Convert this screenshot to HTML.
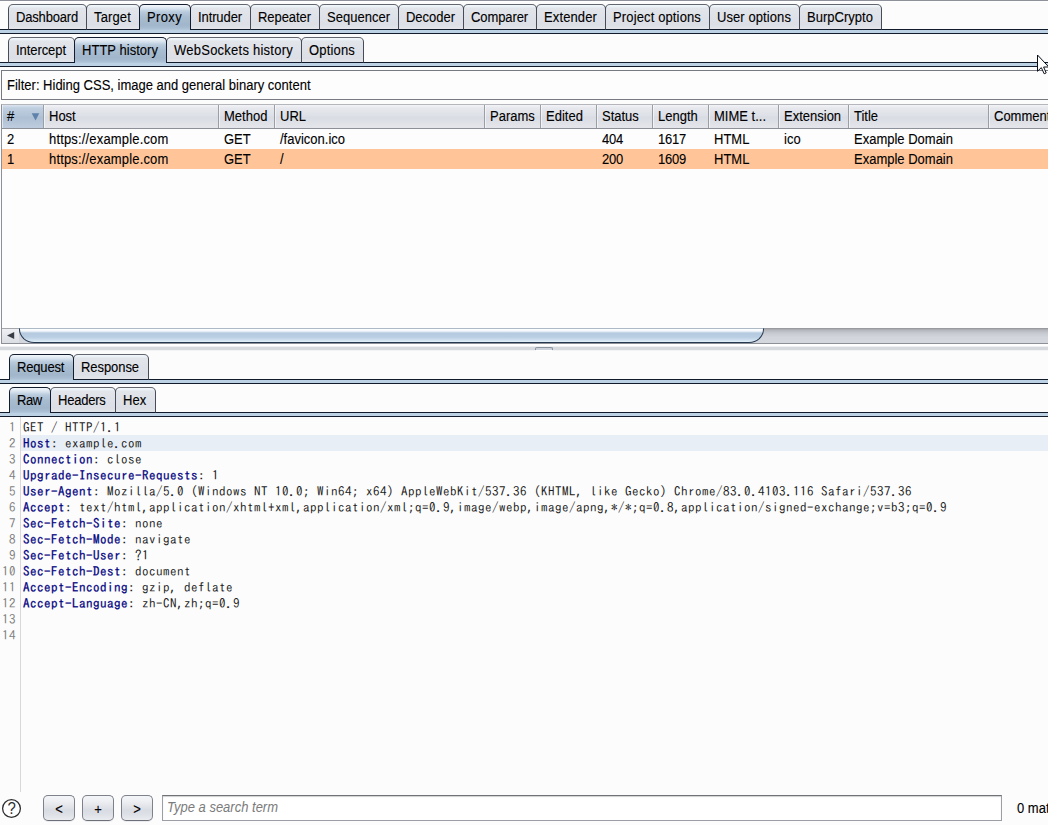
<!DOCTYPE html>
<html><head><meta charset="utf-8"><title>Burp Suite</title>
<style>
html,body{margin:0;padding:0;}
body{width:1048px;height:825px;overflow:hidden;background:#fcfcfc;position:relative;font-family:"Liberation Sans",sans-serif;font-size:13px;color:#000;}
.abs{position:absolute;}
.t{-webkit-text-stroke:0.1px #000;display:inline-block;line-height:16px;white-space:nowrap;transform:scaleY(1.075);transform-origin:0 12.5px;}
.hl{position:absolute;left:0;width:1048px;height:1px;}
.bar{position:absolute;left:0;width:1048px;height:5px;background:#bdd1e5;border-top:1px solid #121b2c;border-bottom:1px solid #121b2c;box-sizing:border-box;}
.tab{position:absolute;box-sizing:border-box;height:26px;border:1px solid #474c58;border-top-color:#62666e;border-bottom:1px solid #121b2c;border-radius:5px 5px 0 0;
 background:linear-gradient(#f4f8fb 0px,#e9f0f6 2px,#e2e5ea 3px,#dee1e7 13px,#dcdfe5 20px,#e5e7ec 25px);
 line-height:25px;padding-left:7px;white-space:nowrap;}
.tab.sel{border-color:#141d2f;border-bottom:none;
 background:linear-gradient(#f4f8fc 0px,#dde7f1 3px,#b8cadc 7px,#a9bdd1 12px,#a2b6cb 20px,#a9bdd2 23px,#b5c9dd 25px);}
.th{position:absolute;top:105px;height:23px;box-sizing:border-box;line-height:23px;padding-left:5px;border-right:1px solid #9b9ea5;white-space:nowrap;overflow:hidden;
 background:linear-gradient(#f3f4f7 0px,#e6e8ed 3px,#dde0e6 11px,#d9dce3 12px,#e3e5ea 22px);box-shadow:inset 1px 0 0 rgba(255,255,255,.55);}
.th.sorted{background:linear-gradient(#dbe5f0 0px,#c0cfe0 3px,#b3c4d8 11px,#adbfd4 12px,#bccbdd 22px);}
.td{position:absolute;height:20px;line-height:20px;white-space:nowrap;}
.ed{position:absolute;left:0;top:417px;width:1048px;height:376px;font-family:"IPAGothic","Liberation Mono",monospace;font-size:13px;letter-spacing:0.5px;}
.ln{position:absolute;left:0;width:16px;text-align:right;color:#7f7f7f;height:16px;line-height:16px;}
.tx{position:absolute;left:23px;height:16px;line-height:16px;white-space:pre;color:#1c1c1c;}
.tx b{font-weight:normal;color:#000080;-webkit-text-stroke:0.25px #000080;}
.btn{position:absolute;top:795px;height:26px;width:32px;box-sizing:border-box;border:1px solid #7d818a;border-bottom-color:#6c7079;border-radius:5px;text-align:center;line-height:28px;
 background:linear-gradient(#f4f5f8 0px,#eef0f3 5px,#e3e5ea 10px,#d9dce2 14px,#dcdfe5 18px,#eaecf0 24px);box-shadow:0 1px 0 #ececef;}
.btn .t{transform-origin:0 12.5px;}
</style></head><body>
<div class="hl" style="top:0;background:#8e9199"></div><div class="hl" style="top:1px;background:#fff"></div>

<div class="bar" style="top:29px"></div>
<div class="tab" style="left:8px;top:4px;width:79px"><span class="t" style="letter-spacing:-0.179px;">Dashboard</span></div>
<div class="tab" style="left:86px;top:4px;width:54px"><span class="t" style="letter-spacing:0.143px;">Target</span></div>
<div class="tab" style="left:190px;top:4px;width:61px"><span class="t" style="letter-spacing:-0.102px;">Intruder</span></div>
<div class="tab" style="left:250px;top:4px;width:70px"><span class="t" style="letter-spacing:-0.061px;">Repeater</span></div>
<div class="tab" style="left:319px;top:4px;width:80px"><span class="t" style="letter-spacing:0.012px;">Sequencer</span></div>
<div class="tab" style="left:398px;top:4px;width:66px"><span class="t" style="letter-spacing:-0.020px;">Decoder</span></div>
<div class="tab" style="left:463px;top:4px;width:74px"><span class="t" style="letter-spacing:-0.100px;">Comparer</span></div>
<div class="tab" style="left:536px;top:4px;width:70px"><span class="t" style="letter-spacing:0.119px;">Extender</span></div>
<div class="tab" style="left:605px;top:4px;width:105px"><span class="t" style="letter-spacing:0.133px;">Project options</span></div>
<div class="tab" style="left:709px;top:4px;width:91px"><span class="t" style="letter-spacing:0.085px;">User options</span></div>
<div class="tab" style="left:799px;top:4px;width:83px"><span class="t" style="letter-spacing:0.025px;">BurpCrypto</span></div>
<div class="tab sel" style="left:139px;top:4px;width:52px"><span class="t" style="letter-spacing:0.353px;">Proxy</span></div>
<div class="bar" style="top:62px"></div>
<div class="tab" style="left:8px;top:37px;width:67px"><span class="t" style="letter-spacing:-0.066px;">Intercept</span></div>
<div class="tab" style="left:166px;top:37px;width:136px"><span class="t" style="letter-spacing:0.242px;">WebSockets history</span></div>
<div class="tab" style="left:301px;top:37px;width:63px"><span class="t" style="letter-spacing:0.170px;">Options</span></div>
<div class="tab sel" style="left:74px;top:37px;width:93px"><span class="t" style="letter-spacing:0.033px;">HTTP history</span></div>
<div class="abs" style="left:1px;top:70px;width:1060px;height:30px;box-sizing:border-box;border:1px solid #777a80;background:#fdfdfd;line-height:29px;padding-left:5px"><span class="t" style="">Filter: Hiding CSS, image and general binary content</span></div>
<div class="abs" style="left:1px;top:104px;width:1060px;height:240px;box-sizing:border-box;border:1px solid #8d9097;border-top-color:#b4b6bb;background:#fdfdfd"></div>
<div class="hl" style="top:128px;left:2px;background:#8d9097"></div>

<div class="th sorted" style="left:2px;width:42px"><span class="t" style="">#</span></div>
<div class="th " style="left:44px;width:175px"><span class="t" style="">Host</span></div>
<div class="th " style="left:219px;width:56px"><span class="t" style="">Method</span></div>
<div class="th " style="left:275px;width:210px"><span class="t" style="">URL</span></div>
<div class="th " style="left:485px;width:56px"><span class="t" style="">Params</span></div>
<div class="th " style="left:541px;width:56px"><span class="t" style="">Edited</span></div>
<div class="th " style="left:597px;width:56px"><span class="t" style="">Status</span></div>
<div class="th " style="left:653px;width:56px"><span class="t" style="">Length</span></div>
<div class="th " style="left:709px;width:70px"><span class="t" style="">MIME t...</span></div>
<div class="th " style="left:779px;width:70px"><span class="t" style="">Extension</span></div>
<div class="th " style="left:849px;width:140px"><span class="t" style="">Title</span></div>
<div class="th " style="left:989px;width:80px"><span class="t" style="">Comment</span></div>
<svg class="abs" style="left:31px;top:113px" width="9" height="8"><path d="M0.7 0.3 L8.3 0.3 L4.5 7.5 Z" fill="#5f82aa"/></svg>
<div class="abs" style="left:2px;top:149px;width:1046px;height:20px;background:#ffc599"></div>
<div class="td" style="left:7px;top:130px"><span class="t" style="">2</span></div>
<div class="td" style="left:49px;top:130px"><span class="t" style="letter-spacing:0.167px;">https://example.com</span></div>
<div class="td" style="left:224px;top:130px"><span class="t" style="">GET</span></div>
<div class="td" style="left:280px;top:130px"><span class="t" style="">/favicon.ico</span></div>
<div class="td" style="left:602px;top:130px"><span class="t" style="letter-spacing:-0.250px;">404</span></div>
<div class="td" style="left:658px;top:130px"><span class="t" style="letter-spacing:-0.250px;">1617</span></div>
<div class="td" style="left:714px;top:130px"><span class="t" style="">HTML</span></div>
<div class="td" style="left:784px;top:130px"><span class="t" style="">ico</span></div>
<div class="td" style="left:854px;top:130px"><span class="t" style="">Example Domain</span></div>
<div class="td" style="left:7px;top:150px"><span class="t" style="">1</span></div>
<div class="td" style="left:49px;top:150px"><span class="t" style="letter-spacing:0.167px;">https://example.com</span></div>
<div class="td" style="left:224px;top:150px"><span class="t" style="">GET</span></div>
<div class="td" style="left:280px;top:150px"><span class="t" style="">/</span></div>
<div class="td" style="left:602px;top:150px"><span class="t" style="letter-spacing:-0.250px;">200</span></div>
<div class="td" style="left:658px;top:150px"><span class="t" style="letter-spacing:-0.250px;">1609</span></div>
<div class="td" style="left:714px;top:150px"><span class="t" style="">HTML</span></div>
<div class="td" style="left:854px;top:150px"><span class="t" style="">Example Domain</span></div>

<div class="abs" style="left:2px;top:328px;width:1046px;height:15px;background:linear-gradient(#909196 0px,#b4b6bc 2px,#c6c9d0 5px,#d2d5dc 9px,#d4d7de 14px)"></div>
<div class="abs" style="left:2px;top:328px;width:17px;height:15px;background:linear-gradient(#a4a6ab 0px,#a4a6ab 1px,#eff0f3 1px,#e6e8ec 7px,#dcdfe4 14px)"></div>
<svg class="abs" style="left:6px;top:331px" width="9" height="9"><path d="M8.2 0.9 L8.2 7.9 L1 4.4 Z" fill="#373c45"/></svg>
<div class="abs" style="left:19px;top:328px;width:745px;height:15px;box-sizing:border-box;border:1px solid #24384f;border-top:1px solid #aeb9c6;border-radius:0 0 15px 15px / 0 0 14px 14px;
 background:linear-gradient(#ffffff 0px,#f2f7fb 2px,#b6cadf 4px,#b9cee3 8px,#cfe0ef 11px,#e2f0fa 13px)"></div>
<div class="abs" style="left:0;top:344px;width:1048px;height:7px;background:linear-gradient(#fff 0,#fff 2px,#eeeff2 2px,#eeeff2 3px,#d6d9de 3px,#d6d9de 6px,#f3f4f6 6px,#f3f4f6 7px)"></div>
<div class="abs" style="left:535px;top:347px;width:18px;height:3px;box-sizing:border-box;border:1px solid #8793a0;border-bottom:none;border-radius:2px 2px 0 0;background:#cdd1d9"></div>
<div class="abs" style="left:536px;top:350px;width:16px;height:1px;background:#ffffff"></div>

<div class="bar" style="top:379px"></div>
<div class="tab" style="left:73px;top:354px;width:76px"><span class="t" style="letter-spacing:-0.068px;">Response</span></div>
<div class="tab sel" style="left:9px;top:354px;width:65px"><span class="t" style="letter-spacing:-0.160px;">Request</span></div>
<div class="bar" style="top:412px"></div>
<div class="tab" style="left:50px;top:387px;width:66px"><span class="t" style="letter-spacing:-0.220px;">Headers</span></div>
<div class="tab" style="left:115px;top:387px;width:41px"><span class="t" style="letter-spacing:0.025px;">Hex</span></div>
<div class="tab sel" style="left:9px;top:387px;width:42px"><span class="t" style="letter-spacing:-0.439px;">Raw</span></div>
<div class="ed">
<div class="abs" style="left:20px;top:0;width:1px;height:375px;background:#d9d9d9"></div>
<div class="abs" style="left:21px;top:18px;width:1027px;height:16px;background:#e8eef5"></div>
<div class="ln" style="top:3px">1</div><div class="tx" style="top:3px">GET / HTTP/1.1</div>
<div class="ln" style="top:19px">2</div><div class="tx" style="top:19px"><b>Host</b>: example.com</div>
<div class="ln" style="top:35px">3</div><div class="tx" style="top:35px"><b>Connection</b>: close</div>
<div class="ln" style="top:51px">4</div><div class="tx" style="top:51px"><b>Upgrade-Insecure-Requests</b>: 1</div>
<div class="ln" style="top:67px">5</div><div class="tx" style="top:67px"><b>User-Agent</b>: Mozilla/5.0 (Windows NT 10.0; Win64; x64) AppleWebKit/537.36 (KHTML, like Gecko) Chrome/83.0.4103.116 Safari/537.36</div>
<div class="ln" style="top:83px">6</div><div class="tx" style="top:83px"><b>Accept</b>: text/html,application/xhtml+xml,application/xml;q=0.9,image/webp,image/apng,*/*;q=0.8,application/signed-exchange;v=b3;q=0.9</div>
<div class="ln" style="top:99px">7</div><div class="tx" style="top:99px"><b>Sec-Fetch-Site</b>: none</div>
<div class="ln" style="top:115px">8</div><div class="tx" style="top:115px"><b>Sec-Fetch-Mode</b>: navigate</div>
<div class="ln" style="top:131px">9</div><div class="tx" style="top:131px"><b>Sec-Fetch-User</b>: ?1</div>
<div class="ln" style="top:147px">10</div><div class="tx" style="top:147px"><b>Sec-Fetch-Dest</b>: document</div>
<div class="ln" style="top:163px">11</div><div class="tx" style="top:163px"><b>Accept-Encoding</b>: gzip, deflate</div>
<div class="ln" style="top:179px">12</div><div class="tx" style="top:179px"><b>Accept-Language</b>: zh-CN,zh;q=0.9</div>
<div class="ln" style="top:195px">13</div>
<div class="ln" style="top:211px">14</div>
</div>

<svg class="abs" style="left:0;top:797px" width="24" height="24"><circle cx="11.5" cy="11.5" r="8.9" fill="#fff" stroke="#2e2e2e" stroke-width="1.3"/><text x="11.7" y="16" text-anchor="middle" font-family="Liberation Sans, sans-serif" font-size="15" fill="#2e2e2e" transform="scale(1,1.08)">?</text></svg>
<div class="btn" style="left:43px"><span class="t">&lt;</span></div>
<div class="btn" style="left:82px"><span class="t">+</span></div>
<div class="btn" style="left:121px"><span class="t">&gt;</span></div>
<div class="abs" style="left:162px;top:795px;width:840px;height:26px;box-sizing:border-box;border:1px solid #9b9ea4;border-top-color:#6f7276;background:#fff;line-height:24px;padding-left:4px;color:#7b7b7b;font-style:italic;box-shadow:inset 0 1px 1px #d0d0d0"><span class="t" style="-webkit-text-stroke:0">Type a search term</span></div>
<div class="abs" style="left:1017px;top:797px;height:24px;line-height:24px;white-space:nowrap"><span class="t" style="">0 matches</span></div>
<svg class="abs" style="left:1037px;top:54px" width="14" height="22"><path d="M0.5 1 L0.5 17.3 L4.3 13.6 L7.2 19.8 L9.2 18.9 L6.6 13 L11.8 13 Z" fill="#fff" stroke="#0a0f1a" stroke-width="1"/></svg>
</body></html>
